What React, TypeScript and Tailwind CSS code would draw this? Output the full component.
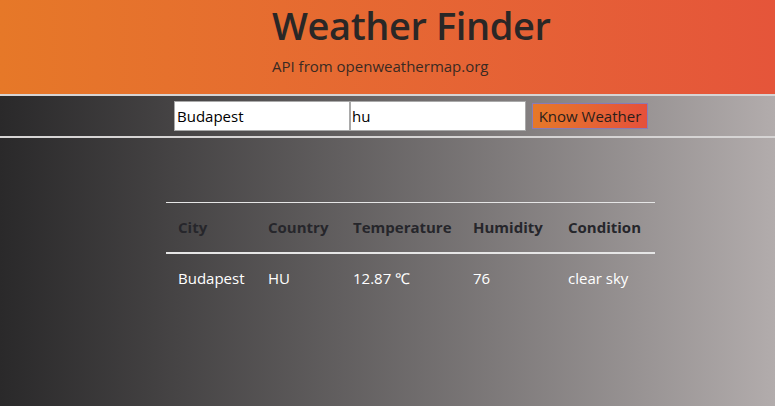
export default function App() {
  return (
    <div className="h-[406px] w-[775px] overflow-hidden bg-gradient-to-r from-[#2a292a] to-[#b2acac] font-['Open_Sans',sans-serif]">
      {/* Header */}
      <div className="h-[94px] bg-gradient-to-r from-[#e67828] to-[#e5553a] pl-[272px] pt-[2px]">
        <h1 className="text-[38px] font-semibold leading-[46px] tracking-[-0.4px] text-[#2a2726]">Weather Finder</h1>
        <p className="mt-[8px] text-[15px] leading-[20px] text-[#3a2a22]">API from openweathermap.org</p>
      </div>

      {/* Search bar */}
      <div className="flex h-[44px] items-center border-y-[2px] border-[#d6d4d4] pl-[174px]">
        <input
          defaultValue="Budapest"
          className="h-[30px] w-[176px] border border-[#a9a9a9] bg-white px-[2px] text-[15px] text-black outline-none"
        />
        <input
          defaultValue="hu"
          className="h-[30px] w-[176px] border border-[#a9a9a9] bg-white px-[1px] text-[15px] text-black outline-none"
        />
        <button className="ml-[6px] h-[26px] w-[116px] border border-[#8a7ab5] bg-gradient-to-r from-[#e67828] to-[#e5503b] text-[15px] leading-none text-[#2a1e1a]">
          Know Weather
        </button>
      </div>

      {/* Results */}
      <div className="pl-[166px] pt-[64px]">
        <table className="w-[489px] border-collapse text-left text-[15px]">
          <thead>
            <tr className="border-y border-[#e6e6e6]">
              <th className="w-[90px] py-[13px] pl-[12px] font-bold text-[#26262b]">City</th>
              <th className="w-[85px] py-[13px] pl-[12px] font-bold text-[#26262b]">Country</th>
              <th className="w-[120px] py-[13px] pl-[12px] font-bold text-[#26262b]">Temperature</th>
              <th className="w-[95px] py-[13px] pl-[12px] font-bold text-[#26262b]">Humidity</th>
              <th className="py-[13px] pl-[12px] font-bold text-[#26262b]">Condition</th>
            </tr>
          </thead>
          <tbody>
            <tr className="border-t-[2px] border-[#e6e6e6] text-white">
              <td className="py-[13px] pl-[12px]">Budapest</td>
              <td className="py-[13px] pl-[12px]">HU</td>
              <td className="py-[13px] pl-[12px]">12.87 ℃</td>
              <td className="py-[13px] pl-[12px]">76</td>
              <td className="py-[13px] pl-[12px]">clear sky</td>
            </tr>
          </tbody>
        </table>
      </div>
    </div>
  );
}
